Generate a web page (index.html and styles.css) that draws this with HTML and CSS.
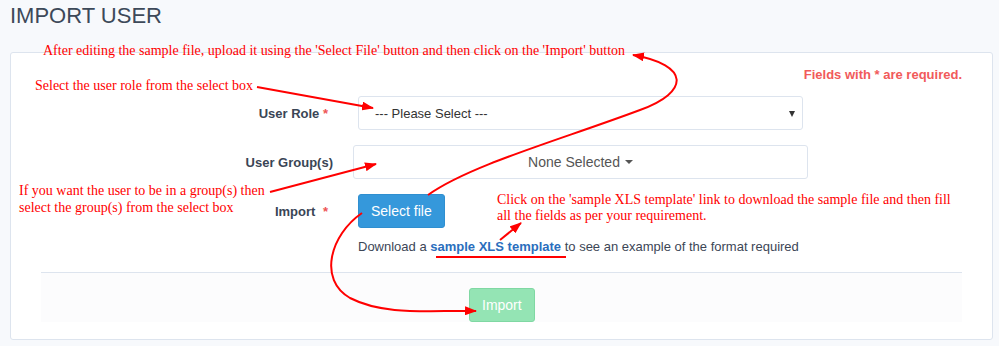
FILE: index.html
```html
<!DOCTYPE html>
<html lang="en">
<head>
    <meta charset="UTF-8">
    <title>Import User</title>
    <link rel="stylesheet" href="styles.css">
</head>
<body>
    <div class="page">
        <h1 class="page-title">IMPORT USER</h1>

        <div class="panel">
            <p class="required-note">Fields with * are required.</p>

            <div class="form-row">
                <label class="form-label">User Role <span class="req">*</span></label>
                <div class="select-box">
                    <span>--- Please Select ---</span>
                    <span class="select-arrow"></span>
                </div>
            </div>

            <div class="form-row">
                <label class="form-label">User Group(s)</label>
                <div class="multi-select">
                    None Selected <span class="caret"></span>
                </div>
            </div>

            <div class="form-row">
                <label class="form-label">Import <span class="req req-gap">*</span></label>
                <div>
                    <button class="btn btn-blue">Select file</button>
                </div>
            </div>

            <p class="help-text">Download a <a href="#">sample XLS template</a> to see an example of the format required</p>

            <div class="panel-footer">
                <button class="btn btn-green">Import</button>
            </div>
        </div>
    </div>

    <!-- annotation layer drawn over the form -->
    <div class="notes">
        <div class="note note-top">After editing the sample file, upload it using the 'Select File' button and then click on the 'Import' button</div>
        <div class="note note-role">Select the user role from the select box</div>
        <div class="note note-group">If you want the user to be in a group(s) then<br>select the group(s) from the select box</div>
        <div class="note note-link">Click on the 'sample XLS template' link to download the sample file and then fill<br>all the fields as per your requirement.</div>

        <svg class="arrows" xmlns="http://www.w3.org/2000/svg" width="999" height="346" viewBox="0 0 999 346">
            <defs>
                <marker id="head" markerWidth="12" markerHeight="9" refX="11" refY="4.5" orient="auto" markerUnits="userSpaceOnUse">
                    <path d="M0,0 L12,4.5 L0,9 z" fill="#f00"/>
                </marker>
            </defs>
            <g fill="none" stroke="#f00" stroke-width="2">
                <path d="M257,87 L373,108" marker-end="url(#head)"/>
                <path d="M270,192 L376,164" marker-end="url(#head)"/>
                <path d="M428,195 C470,165 560,140 640,110 C690,92 690,65 633,55" marker-end="url(#head)"/>
                <path d="M362,213 C330,235 318,280 350,298 C385,316 430,310 476,311" marker-end="url(#head)"/>
                <path d="M500,240 L521,223" marker-end="url(#head)"/>
                <path d="M436,257 L566,257"/>
            </g>
        </svg>
    </div>
</body>
</html>
```

FILE: styles.css
```css
body {
    margin: 0;
    background-color: #f7f9fc;
    font-family: "Liberation Sans", Arial, sans-serif;
    font-size: 13px;
    color: #3c4656;
}
.page {
    padding: 3px 6px 0 10px;
}
.page-title {
    margin: 0 0 23px;
    font-size: 22px;
    line-height: 26px;
    font-weight: normal;
    color: #3d4959;
}

.panel {
    height: 288px;
    box-sizing: border-box;
    border: 1px solid #dde4ee;
    border-radius: 3px;
    background-color: #fff;
    padding: 13px 30px 0 30px;
}
.required-note {
    margin: 0 0 12px;
    text-align: right;
    font-weight: bold;
    line-height: 18px;
    color: #f15a5a;
}

.form-row {
    display: grid;
    grid-template-columns: 292px 1fr;
    column-gap: 25px;
    align-items: center;
    margin-bottom: 15px;
}
.form-label {
    text-align: right;
    font-weight: bold;
    color: #3a4555;
}
.req {
    color: #ee5555;
    margin-right: 5px;
}
.req-gap {
    margin-left: 4px;
}

.select-box {
    width: 445px;
    height: 34px;
    box-sizing: border-box;
    border: 1px solid #dde4ee;
    border-radius: 3px;
    display: flex;
    align-items: center;
    justify-content: space-between;
    padding: 0 7px 0 16px;
    color: #333;
}
.select-arrow {
    width: 0;
    height: 0;
    margin-top: 2px;
    border-left: 3.5px solid transparent;
    border-right: 3.5px solid transparent;
    border-top: 6px solid #333;
}
.multi-select {
    width: 455px;
    height: 34px;
    margin-left: -5px;
    box-sizing: border-box;
    border: 1px solid #dde4ee;
    border-radius: 3px;
    display: flex;
    align-items: center;
    justify-content: center;
    font-size: 14px;
    color: #555;
}
.caret {
    display: inline-block;
    margin-left: 5px;
    width: 0;
    height: 0;
    border-left: 4px solid transparent;
    border-right: 4px solid transparent;
    border-top: 4px solid #555;
}

.btn {
    height: 34px;
    padding: 0 12px;
    border-radius: 3px;
    font-family: "Liberation Sans", Arial, sans-serif;
    font-size: 14px;
    color: #fff;
}
.btn-blue {
    background-color: #3598db;
    border: 1px solid #2f8fd0;
}
.btn-green {
    background-color: #94e4b4;
    border: 1px solid #80d8a3;
    margin-left: 428px;
}

.help-text {
    margin: -5px 0 0 317px;
    line-height: 18px;
}
.help-text a {
    color: #2a6ebd;
    font-weight: bold;
    text-decoration: none;
}

.panel-footer {
    margin-top: 16px;
    border-top: 1px solid #dde4ee;
    background-color: #fcfcfd;
    padding-top: 15px;
    height: 34px;
}

/* annotations */
.notes {
    position: absolute;
    top: 0;
    left: 0;
    width: 999px;
    height: 346px;
    pointer-events: none;
}
.arrows {
    position: absolute;
    top: 0;
    left: 0;
}
.note {
    position: absolute;
    font-family: "Liberation Serif", "Times New Roman", serif;
    font-size: 14px;
    line-height: 17px;
    color: #f00;
    white-space: nowrap;
}
.note-top {
    top: 42px;
    left: 43px;
}
.note-role {
    top: 77px;
    left: 35px;
}
.note-group {
    top: 182px;
    left: 19px;
}
.note-link {
    top: 192px;
    left: 497px;
    line-height: 16px;
}
```
